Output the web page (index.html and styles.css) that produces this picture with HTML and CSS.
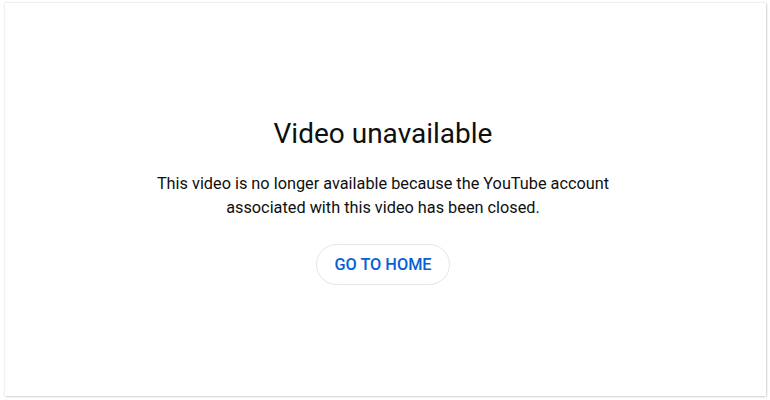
FILE: index.html
```html
<!DOCTYPE html>
<html>
<head>
<meta charset="utf-8">
<link rel="stylesheet" href="styles.css">
</head>
<body>
<div class="frame">
  <div class="card">
    <h1 class="title">Video unavailable</h1>
    <p class="message">This video is no longer available because the YouTube account<br>associated with this video has been closed.</p>
    <button class="home-btn">GO TO HOME</button>
  </div>
</div>
</body>
</html>
```
FILE: styles.css
```css
html, body {
  margin: 0;
  padding: 0;
  background: #ffffff;
}
body {
  font-family: Roboto, "Liberation Sans", Arial, sans-serif;
  width: 770px;
  height: 400px;
  overflow: hidden;
}
.frame {
  padding: 3px 4px 4px 5px;
  height: 400px;
  box-sizing: border-box;
}
.card {
  height: 100%;
  box-sizing: border-box;
  background: #ffffff;
  box-shadow: 0 0 2px rgba(0,0,0,0.18), 1px 1px 2px rgba(0,0,0,0.12);
  display: flex;
  flex-direction: column;
  align-items: center;
  padding-top: 113px;
  padding-right: 5px;
}
.title {
  margin: 0;
  font-size: 28px;
  font-weight: 400;
  line-height: 36px;
  color: #0f0f0f;
}
.message {
  margin: 20px 0 0;
  font-size: 16.3px;
  line-height: 24px;
  text-align: center;
  color: #0f0f0f;
}
.home-btn {
  margin-top: 24px;
  height: 41px;
  padding: 0 17px;
  border: 1px solid #e5e5e5;
  border-radius: 21px;
  background: #ffffff;
  color: #065fd4;
  font-family: Roboto, "Liberation Sans", Arial, sans-serif;
  font-size: 16.3px;
  font-weight: 500;
  letter-spacing: 0;
}
```
